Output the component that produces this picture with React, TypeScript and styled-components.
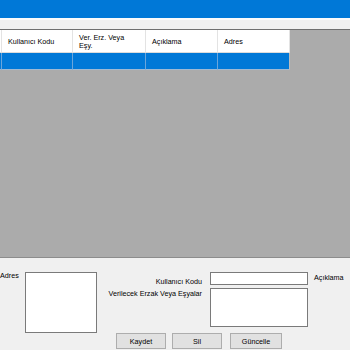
import React from 'react';
import styled, { createGlobalStyle } from 'styled-components';

const GlobalStyle = createGlobalStyle`
  html, body {
    margin: 0;
    padding: 0;
    background: #f0f0f0;
  }
  * {
    box-sizing: border-box;
  }
`;

const Window = styled.div`
  width: 350px;
  height: 350px;
  display: flex;
  flex-direction: column;
  background: #f0f0f0;
  font-family: "Liberation Sans", Arial, sans-serif;
  font-size: 7.2px;
  color: #000;
  overflow: hidden;
`;

const TitleBar = styled.div`
  height: 18px;
  background: #0078d7;
`;

const MenuStrip = styled.div`
  height: 11px;
  background: #f0f0f0;
  border-top: 2px solid #fbfbfb;
`;

const GridArea = styled.div`
  height: 229px;
  background: #ababab;
  border-top: 1px solid #6f6f6f;
  border-bottom: 1px solid #8c8c8c;
`;

const Table = styled.div`
  display: grid;
  grid-template-columns: 2px 71px 73px 72px 72px;
  grid-template-rows: 23px 17px;
  width: 290px;
`;

const HeadCell = styled.div<{ $stub?: boolean }>`
  background: #fff;
  border-right: 1px solid #e3e3e3;
  border-bottom: 1px solid #dcdcdc;
  display: flex;
  align-items: center;
  padding: ${p => (p.$stub ? '0' : '1px 6px 0')};
  line-height: 8px;
  white-space: pre-line;
`;

const RowCell = styled.div<{ $last?: boolean }>`
  background: #0078d7;
  border-right: 1px solid ${p => (p.$last ? '#bcbcbc' : '#6aa5db')};
  border-bottom: 1px solid #9fb9d3;
`;

const Panel = styled.div`
  flex: 1;
  display: grid;
  grid-template-columns: 25px 72px 19px 86px 8px 98px 6px 1fr;
  grid-template-rows: 13px 3px 39px 6px 16px;
  padding-top: 14px;
`;

const Label = styled.div<{ $right?: boolean }>`
  white-space: nowrap;
  text-align: ${p => (p.$right ? 'right' : 'left')};
`;

const Box = styled.div`
  background: #fff;
  border: 1px solid #7a7a7a;
`;

const ButtonRow = styled.div`
  display: flex;
  gap: 6px;
`;

const Button = styled.div<{ $w: number }>`
  width: ${p => p.$w}px;
  height: 16px;
  background: #e1e1e1;
  border: 1px solid #adadad;
  display: flex;
  align-items: center;
  justify-content: center;
`;

const columns = ['Kullanıcı Kodu', 'Ver. Erz. Veya\nEşy.', 'Açıklama', 'Adres'];

export default function App() {
  return (
    <Window>
      <GlobalStyle />
      <TitleBar />
      <MenuStrip />
      <GridArea>
        <Table>
          <HeadCell $stub />
          {columns.map(c => (
            <HeadCell key={c}>{c}</HeadCell>
          ))}
          <RowCell />
          {columns.map((c, i) => (
            <RowCell key={c} $last={i === columns.length - 1} />
          ))}
        </Table>
      </GridArea>
      <Panel>
        <Label style={{ gridColumn: '1', gridRow: '1', marginTop: -1 }}>Adres</Label>
        <Box style={{ gridColumn: '2', gridRow: '1 / 5' }} />
        <Label $right style={{ gridColumn: '3 / 5', gridRow: '1', paddingTop: 5 }}>Kullanıcı Kodu</Label>
        <Box style={{ gridColumn: '6', gridRow: '1' }} />
        <Label style={{ gridColumn: '8', gridRow: '1', paddingTop: 1 }}>Açıklama</Label>
        <Label $right style={{ gridColumn: '3 / 5', gridRow: '3', paddingTop: 1 }}>Verilecek Erzak Veya Eşyalar</Label>
        <Box style={{ gridColumn: '6', gridRow: '3' }} />
        <ButtonRow style={{ gridColumn: '4 / 9', gridRow: '5' }}>
          <Button $w={50}>Kaydet</Button>
          <Button $w={50}>Sil</Button>
          <Button $w={52} style={{ marginLeft: 2 }}>Güncelle</Button>
        </ButtonRow>
      </Panel>
    </Window>
  );
}
